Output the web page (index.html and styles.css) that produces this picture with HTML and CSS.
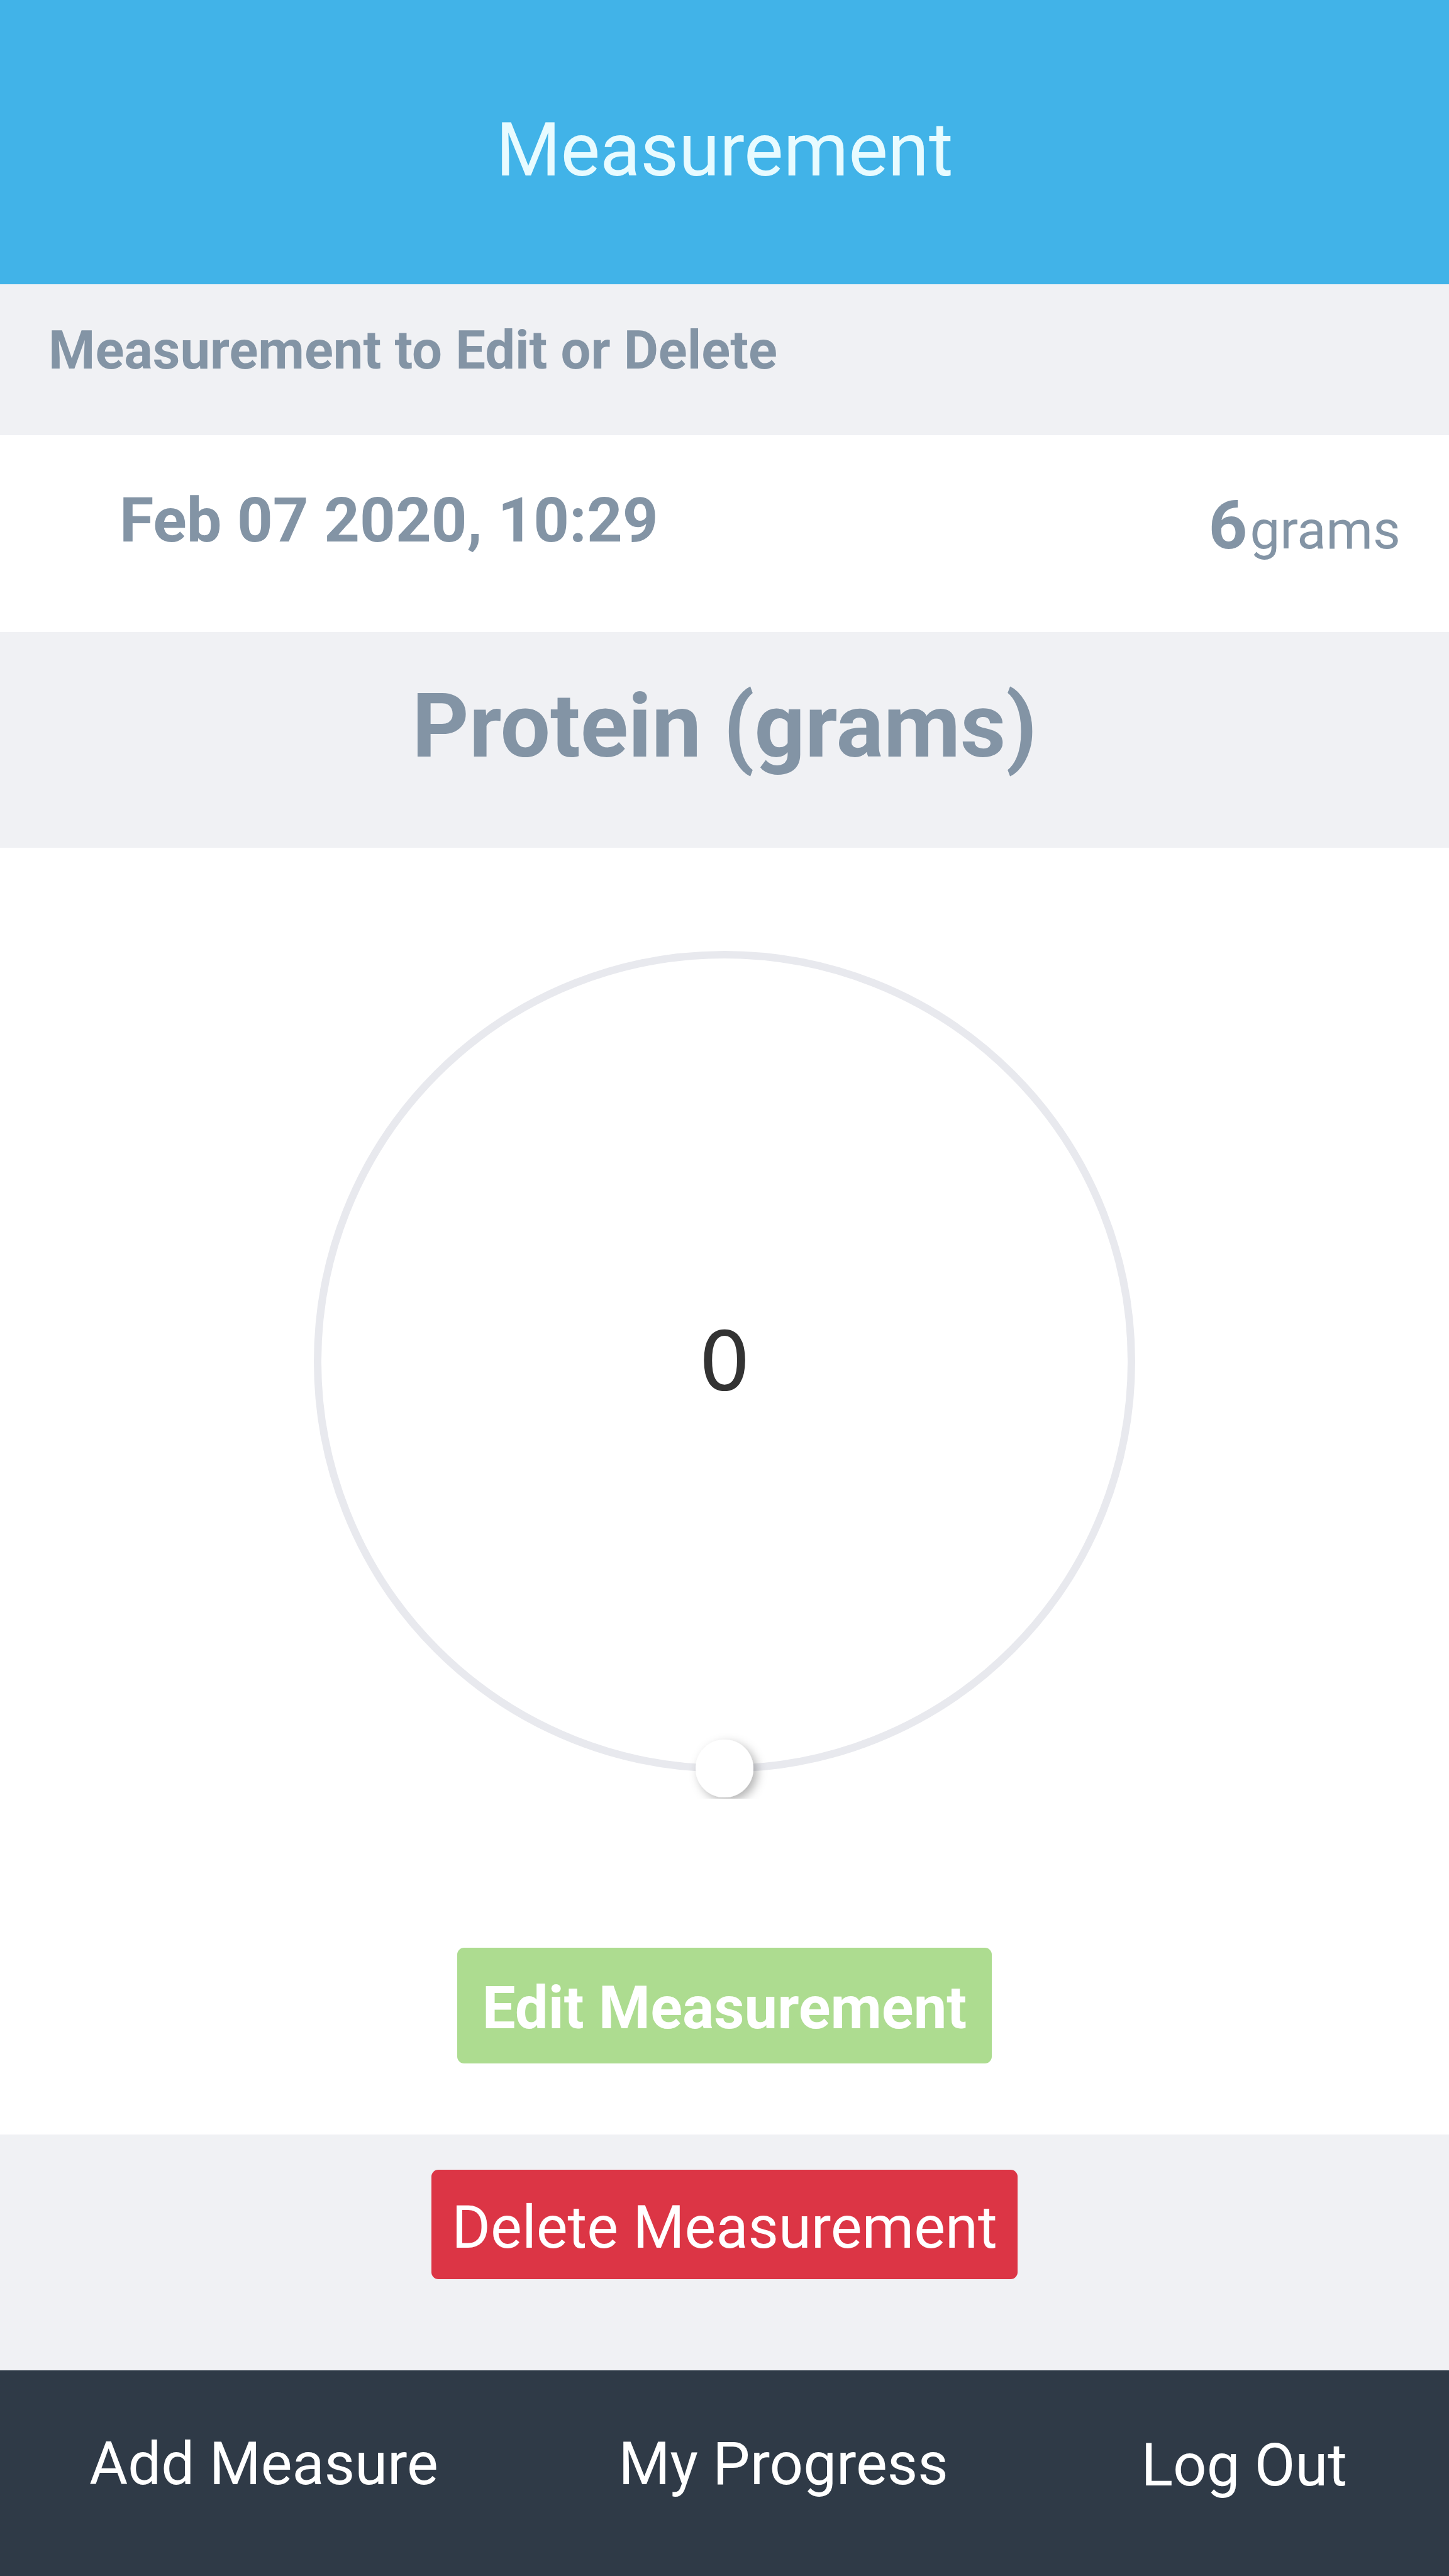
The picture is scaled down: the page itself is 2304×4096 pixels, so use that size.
FILE: index.html
```
<!DOCTYPE html>
<html lang="en">
<head>
  <meta charset="utf-8">
  <meta name="viewport" content="width=device-width, initial-scale=1">
  <title>Measurement</title>
  <link rel="stylesheet" href="styles.css">
</head>
<body>
  <header class="header">
    <h1 class="header-title">Measurement</h1>
  </header>
  <main>
    <h2 class="intro">Measurement to Edit or Delete</h2>
    <div class="entry">
      <time class="entry-date" datetime="2020-02-07T10:29">Feb 07 2020, 10:29</time>
      <p class="entry-value"><strong>6</strong><span class="entry-unit">grams</span></p>
    </div>
    <h2 class="metric" id="metric">Protein (grams)</h2>
    <form class="editor">
      <div class="dial">
        <svg class="dial-face" viewBox="0 0 1390 1390" aria-hidden="true">
          <defs>
            <filter id="knob-shadow" x="-50%" y="-50%" width="200%" height="200%">
              <feDropShadow dx="6" dy="6" stdDeviation="8" flood-color="#000" flood-opacity="0.3"/>
            </filter>
          </defs>
          <circle class="dial-track" cx="695" cy="695" r="647"/>
          <circle class="dial-knob" cx="695" cy="1342" r="46" filter="url(#knob-shadow)"/>
        </svg>
        <input class="dial-input" type="range" min="0" max="100" value="0" aria-labelledby="metric">
        <output class="dial-value">0</output>
      </div>
      <button class="button button-edit" type="submit">Edit Measurement</button>
    </form>
    <div class="danger">
      <button class="button button-delete" type="button">Delete Measurement</button>
    </div>
  </main>
  <nav class="footer">
    <a class="footer-link" href="#add">Add Measure</a>
    <a class="footer-link" href="#progress">My Progress</a>
    <button class="footer-link footer-logout" type="button">Log Out</button>
  </nav>
</body>
</html>
```

FILE: styles.css
```
* {
  box-sizing: border-box;
}

body {
  margin: 0;
  background: #fff;
  color: #8394a5;
  font-family: Roboto, "Liberation Sans", sans-serif;
}

h1,
h2,
p {
  margin: 0;
}

button {
  border: 0;
  font-family: inherit;
  cursor: pointer;
}

.header {
  padding: 171px 0 145px;
  background: #41b3e8;
  text-align: center;
}

.header-title {
  color: #e8fbff;
  font-size: 118px;
  font-weight: 400;
  line-height: 136px;
}

.intro {
  padding: 55px 77px 85px;
  background: #f0f1f4;
  font-size: 85px;
  line-height: 100px;
}

.entry {
  display: flex;
  justify-content: space-between;
  align-items: flex-start;
  padding: 76px 77px 103px 190px;
}

.entry-date {
  font-size: 99px;
  font-weight: 700;
  line-height: 118px;
}

.entry-value {
  font-size: 108px;
  line-height: 134px;
}

.entry-unit {
  margin-left: 4px;
  font-size: 85px;
  line-height: 1;
}

.metric {
  padding: 67px 0 110px;
  background: #f0f1f4;
  font-size: 141px;
  line-height: 166px;
  text-align: center;
}

.editor {
  display: flex;
  flex-direction: column;
  align-items: center;
  gap: 237px;
  padding: 122px 0 113px;
}

.dial {
  display: grid;
  place-items: center;
  width: 1390px;
  max-width: 100%;
}

.dial-face,
.dial-input,
.dial-value {
  grid-area: 1 / 1;
}

.dial-face {
  display: block;
  width: 100%;
  overflow: hidden;
}

.dial-track {
  fill: none;
  stroke: #e8e9ee;
  stroke-width: 12;
}

.dial-knob {
  fill: #fff;
}

.dial-input {
  width: 100%;
  height: 100%;
  margin: 0;
  opacity: 0;
}

.dial-value {
  color: #333;
  font-family: "DejaVu Sans", sans-serif;
  font-size: 130px;
  line-height: 150px;
}

.button {
  border-radius: 11px;
  color: #fff;
  font-size: 94px;
  line-height: 112px;
}

.button-edit {
  padding: 40px 40px 32px;
  background: #addc90;
  font-weight: 700;
}

.danger {
  display: flex;
  justify-content: center;
  padding: 56px 0 145px;
  background: #f0f1f4;
}

.button-delete {
  padding: 36px 32px 26px;
  background: #dc3545;
}

.footer {
  display: flex;
  justify-content: space-between;
  align-items: flex-start;
  padding: 93px 142px 122px;
  background: #2f3a47;
}

.footer-link {
  color: #fff;
  font-size: 94px;
  line-height: 112px;
  text-decoration: none;
}

.footer-logout {
  padding: 2px 20px 0;
  background: none;
}
```
